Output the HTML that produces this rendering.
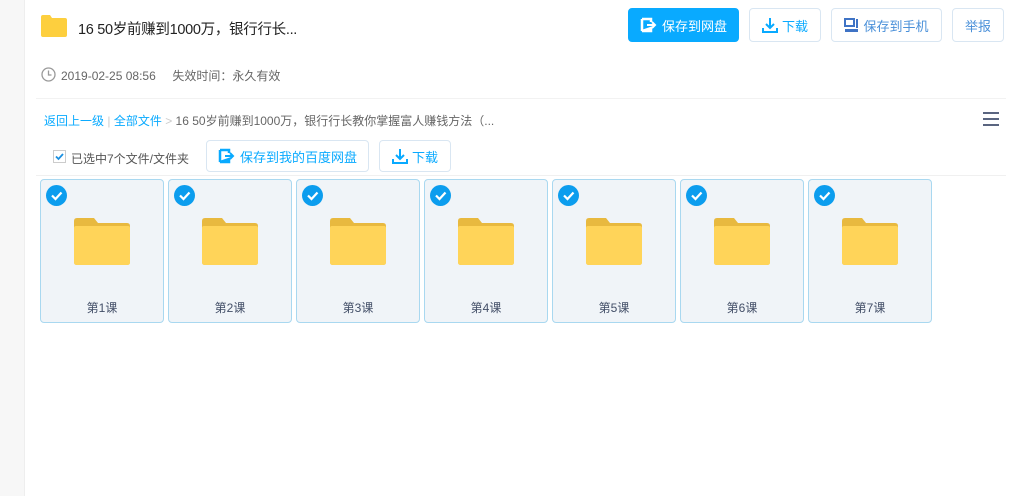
<!DOCTYPE html>
<html><head><meta charset="utf-8"><style>
*{margin:0;padding:0;box-sizing:border-box}
body{width:1013px;height:496px;background:#fff;font-family:"Liberation Sans","Noto Sans CJK SC",sans-serif;position:relative;overflow:hidden;font-size:12px;color:#333}
.side{position:absolute;left:0;top:0;width:25px;height:496px;background:#f7f7f7;border-right:1px solid #eee}
.a{position:absolute}
.btn{position:absolute;border:1px solid #d9e6f2;border-radius:4px;background:#fff;color:#09aaff;font-size:13px;display:flex;align-items:center;justify-content:center;gap:4px}
.card{position:absolute;top:179px;width:124px;height:144px;background:#f0f4f8;border:1px solid #a9d8f0;border-radius:4px}
.chk{position:absolute;left:5px;top:5px;width:21px;height:21px;border-radius:50%;background:#0c9dee}
.card .lab{position:absolute;left:0;right:0;top:119px;text-align:center;font-size:12px;color:#424e67}
</style></head><body>
<div class="side"></div>
<svg class="a" style="left:41px;top:15px" width="26" height="22"><path d="M0 2 Q0 0 2 0 H9 L11 3 H24 Q26 3 26 5 V20 Q26 22 24 22 H2 Q0 22 0 20Z" fill="#fdcf3e"/></svg>
<div class="a" style="left:78px;top:18px;font-size:14.5px;color:#222;letter-spacing:-0.3px">16 50岁前赚到1000万，银行行长...</div>
<div class="btn" style="left:628px;top:8px;width:111px;height:34px;background:#09aaff;border-color:#09aaff;color:#fff"><svg width="18" height="16"><path d="M2 2h9v3M11 11v3H2z M2 2v12" stroke="#fff" stroke-width="2.5" fill="none"/><path d="M7 8h8M12 5l3 3-3 3" stroke="#fff" stroke-width="2" fill="none"/></svg>保存到网盘</div>
<div class="btn" style="left:749px;top:8px;width:72px;height:34px"><svg width="16" height="16"><path d="M8 1v10M4 7l4 4 4-4M1 11v4h14v-4" stroke="#09aaff" stroke-width="2" fill="none"/></svg>下载</div>
<div class="btn" style="left:831px;top:8px;width:111px;height:34px;color:#4a90d9"><svg width="15" height="15"><rect x="1" y="1" width="9" height="7" fill="none" stroke="#3f73c5" stroke-width="2"/><rect x="12" y="1" width="2" height="9" fill="#3f73c5"/><rect x="1" y="11" width="13" height="3" fill="#3f73c5"/></svg>保存到手机</div>
<div class="btn" style="left:952px;top:8px;width:52px;height:34px;color:#4a90d9">举报</div>
<svg class="a" style="left:41px;top:67px" width="15" height="15"><circle cx="7.5" cy="7.5" r="6.5" fill="none" stroke="#999" stroke-width="1.3"/><path d="M7.5 3.5v4.5h3" stroke="#999" stroke-width="1.3" fill="none"/></svg>
<div class="a" style="left:61px;top:67px;color:#666">2019-02-25 08:56 &nbsp;&nbsp;&nbsp; 失效时间：永久有效</div>
<div class="a" style="left:36px;top:98px;width:970px;height:1px;background:#f2f2f2"></div>
<div class="a" style="left:44px;top:112px;color:#666"><span style="color:#09aaff">返回上一级</span> <span style="color:#ccc">|</span> <span style="color:#09aaff">全部文件</span> <span style="color:#ccc">&gt;</span> 16 50岁前赚到1000万，银行行长教你掌握富人赚钱方法（...</div>
<svg class="a" style="left:983px;top:112px" width="16" height="14"><path d="M0 1h16M0 7h16M0 13h16" stroke="#5a6580" stroke-width="2"/></svg>
<div class="a" style="left:53px;top:150px;width:13px;height:13px;border:1px solid #ccc;background:#fff"><svg width="11" height="11"><path d="M2 5.5l2.5 2.5 4.5-5" stroke="#1a8fe0" stroke-width="1.8" fill="none"/></svg></div>
<div class="a" style="left:71px;top:150px;color:#555">已选中7个文件/文件夹</div>
<div class="btn" style="left:206px;top:140px;width:163px;height:32px;font-size:13px"><svg width="18" height="16"><path d="M2 2h9v3M11 11v3H2z M2 2v12" stroke="#09aaff" stroke-width="2.5" fill="none"/><path d="M7 8h8M12 5l3 3-3 3" stroke="#09aaff" stroke-width="2" fill="none"/></svg>保存到我的百度网盘</div>
<div class="btn" style="left:379px;top:140px;width:72px;height:32px"><svg width="16" height="16"><path d="M8 1v10M4 7l4 4 4-4M1 11v4h14v-4" stroke="#09aaff" stroke-width="2" fill="none"/></svg>下载</div>
<div class="a" style="left:36px;top:175px;width:970px;height:1px;background:#f0f0f0"></div>
<div id="cards"></div>
<script>
var h='';for(var i=0;i<7;i++){h+='<div class="card" style="left:'+(40+128*i)+'px"><div class="chk"><svg width="21" height="21"><path d="M6 10.5l3.5 3.5 6-6.5" stroke="#fff" stroke-width="2.2" fill="none"/></svg></div><svg style="position:absolute;left:33px;top:38px" width="56" height="47"><path d="M0 3Q0 0 3 0H20L24 5H53Q56 5 56 8V44Q56 47 53 47H3Q0 47 0 44Z" fill="#e8b93f"/><path d="M0 10Q0 8 2 8H54Q56 8 56 10V44Q56 47 53 47H3Q0 47 0 44Z" fill="#ffd459"/></svg><div class="lab">第'+(i+1)+'课</div></div>'}
document.getElementById('cards').innerHTML=h;
</script>
</body></html>
